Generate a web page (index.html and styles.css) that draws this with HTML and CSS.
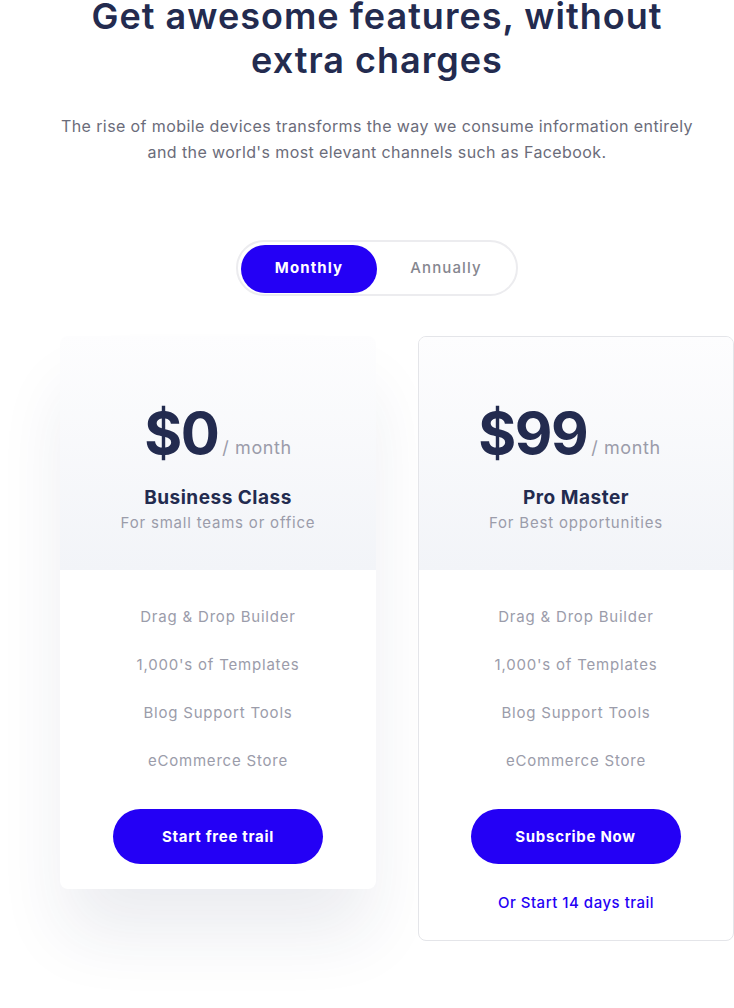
FILE: index.html
```html
<!DOCTYPE html>
<html lang="en">
<head>
<meta charset="utf-8">
<title>Pricing</title>
<link rel="stylesheet" href="styles.css">
</head>
<body>
<section class="pricing">
  <div class="intro">
    <h1 class="title"><span class="title-line">Get awesome features, without</span><span class="title-line">extra charges</span></h1>
    <p class="lead">The rise of mobile devices transforms the way we consume information entirely<br>and the world's most elevant channels such as Facebook.</p>
    <div class="toggle">
      <button class="toggle-btn active">Monthly</button>
      <button class="toggle-btn">Annually</button>
    </div>
  </div>
  <div class="cards">
    <div class="card card-shadow">
      <div class="card-head">
        <div class="price"><span class="amount">$0</span><span class="per">/ month</span></div>
        <h2 class="plan">Business Class</h2>
        <p class="plan-sub">For small teams or office</p>
      </div>
      <div class="card-body">
        <ul class="features">
          <li>Drag &amp; Drop Builder</li>
          <li>1,000's of Templates</li>
          <li>Blog Support Tools</li>
          <li>eCommerce Store</li>
        </ul>
        <a class="btn" href="#">Start free trail</a>
      </div>
    </div>
    <div class="card card-border">
      <div class="card-head">
        <div class="price price-offset"><span class="amount">$99</span><span class="per">/ month</span></div>
        <h2 class="plan">Pro Master</h2>
        <p class="plan-sub">For Best opportunities</p>
      </div>
      <div class="card-body">
        <ul class="features">
          <li>Drag &amp; Drop Builder</li>
          <li>1,000's of Templates</li>
          <li>Blog Support Tools</li>
          <li>eCommerce Store</li>
        </ul>
        <a class="btn" href="#">Subscribe Now</a>
        <a class="trial" href="#">Or Start 14 days trail</a>
      </div>
    </div>
  </div>
</section>
</body>
</html>
```

FILE: styles.css
```css
* { box-sizing: border-box; }
html, body { margin: 0; padding: 0; background: #fff; }
body {
  width: 734px;
  height: 1008px;
  overflow: hidden;
  font-family: Inter, "Open Sans", sans-serif;
  color: #232b4f;
}
.pricing { text-align: center; }
.intro { padding-left: 20px; }
.title {
  margin: 0;
  font-size: 36px;
  line-height: 33px;
  font-weight: 600;
  color: #232b4f;
  letter-spacing: 1px;
  display: flex;
  flex-direction: column;
  row-gap: 11px;
}
.title-line { display: block; }
.lead {
  margin: 36px 0 0;
  font-size: 16px;
  line-height: 26px;
  color: #6b6c7a;
  letter-spacing: 0.4px;
}
.toggle {
  margin: 75px auto 0;
  width: 282px;
  height: 56px;
  border: 2px solid #ececef;
  border-radius: 28px;
  padding: 3px;
  display: flex;
}
.toggle-btn {
  border: 0;
  background: transparent;
  font-family: inherit;
  font-size: 15px;
  font-weight: 500;
  color: #85868f;
  border-radius: 24px;
  height: 48px;
  flex: 1;
  padding: 0 0 3px 2px;
  letter-spacing: 1.1px;
}
.toggle-btn.active {
  flex: 0 0 136px;
  background: #2400f5;
  color: #fff;
  font-weight: 700;
  padding-left: 0;
}
.cards {
  margin-top: 40px;
  padding-left: 60px;
  display: grid;
  grid-template-columns: 316px 316px;
  column-gap: 42px;
  align-items: start;
}
.card {
  border-radius: 8px;
  overflow: hidden;
  background: #fff;
}
.card-shadow {
  box-shadow: 0 50px 70px -6px rgba(30, 40, 90, 0.09);
}
.card-border {
  border: 1px solid #e4e5e9;
}
.card-head {
  height: 234px;
  padding-top: 68px;
  background: linear-gradient(180deg, #fdfdfe 0%, #f2f4f8 100%);
}
.card-border .card-head { height: 233px; padding-top: 67px; }
.price {
  display: flex;
  justify-content: center;
  align-items: baseline;
  line-height: 58px;
  height: 58px;
}
.price-offset { padding-right: 13px; }
.amount {
  font-size: 58px;
  font-weight: 700;
  color: #232b4f;
  letter-spacing: -1.5px;
}
.per {
  font-size: 18px;
  color: #9b9caa;
  margin-left: 4px;
  letter-spacing: 0.6px;
}
.plan {
  margin: 24px 0 0;
  font-size: 19px;
  line-height: 24px;
  font-weight: 700;
  color: #232b4f;
  letter-spacing: 0.5px;
}
.plan-sub {
  margin: 1px 0 0;
  font-size: 15px;
  line-height: 24px;
  color: #9b9caa;
  letter-spacing: 0.8px;
}
.card-body {
  padding: 23px 0 25px;
  display: flex;
  flex-direction: column;
  align-items: center;
}
.features {
  list-style: none;
  margin: 0;
  padding: 0;
}
.features li {
  font-size: 15px;
  line-height: 48px;
  color: #9b9caa;
  letter-spacing: 0.8px;
}
.btn {
  margin-top: 24px;
  width: 210px;
  height: 55px;
  border-radius: 28px;
  background: #2400f5;
  color: #fff;
  text-decoration: none;
  font-size: 15px;
  font-weight: 700;
  letter-spacing: 0.7px;
  display: flex;
  align-items: center;
  justify-content: center;
}
.card-border .btn { margin-left: -1px; }
.trial {
  margin-top: 27px;
  font-size: 15px;
  line-height: 24px;
  font-weight: 500;
  color: #2400f5;
  text-decoration: none;
  letter-spacing: 0.5px;
}
```
